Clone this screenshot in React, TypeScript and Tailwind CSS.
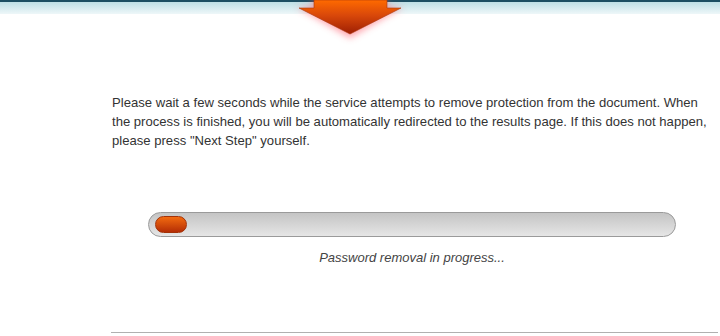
export default function App() {
  return (
    <div className="relative h-[336px] w-[720px] overflow-hidden bg-white font-['Liberation_Sans',Arial,sans-serif]">
      {/* top strip */}
      <div className="h-[2px] bg-[#1d4f63]" />
      <div className="h-[12px] bg-gradient-to-b from-[#bfe0e6] to-[#eef7f9]" />

      {/* arrow */}
      <svg className="absolute left-[290px] top-0" width="120" height="46" viewBox="0 0 120 46">
        <defs>
          <linearGradient id="ag" x1="0" y1="0" x2="0" y2="1">
            <stop offset="0" stopColor="#ff6a00" />
            <stop offset="0.45" stopColor="#d9480a" />
            <stop offset="1" stopColor="#9e1f04" />
          </linearGradient>
          <filter id="glow" x="-30%" y="-30%" width="160%" height="160%">
            <feGaussianBlur stdDeviation="3.5" />
          </filter>
        </defs>
        <path d="M23 -2 H97 V7 H113 L60 38 L7 7 H23 Z" fill="#ff4a5a" opacity="0.5" filter="url(#glow)" />
        <path d="M24 0 H97 V8 H111 L60 34 L9 8 H24 Z" fill="url(#ag)" stroke="#a8350d" strokeWidth="0.6" />
      </svg>

      <div className="ml-[112px] mt-[79px] w-[597px] text-[13.1px] leading-[19px] text-[#333]">
        Please wait a few seconds while the service attempts to remove protection from the document. When the
        process is finished, you will be automatically redirected to the results page. If this does not happen,
        please press "Next Step" yourself.
      </div>

      <div className="ml-[148px] mt-[62px] w-[528px]">
        <div className="flex h-[25px] items-center rounded-full border border-[#9a9a9a] bg-gradient-to-b from-[#c4c4c4] to-[#e6e6e6] px-[6px]">
          <div className="h-[17px] w-[32px] rounded-full border border-[#a33208] bg-gradient-to-b from-[#f26a10] to-[#b52d06]" />
        </div>
        <div className="mt-[11px] text-center text-[13px] italic text-[#444]">Password removal in progress...</div>
      </div>

      <div className="absolute bottom-[3px] left-[111px] right-[2px] h-[1px] bg-[#b0b0b0]" />
    </div>
  );
}
